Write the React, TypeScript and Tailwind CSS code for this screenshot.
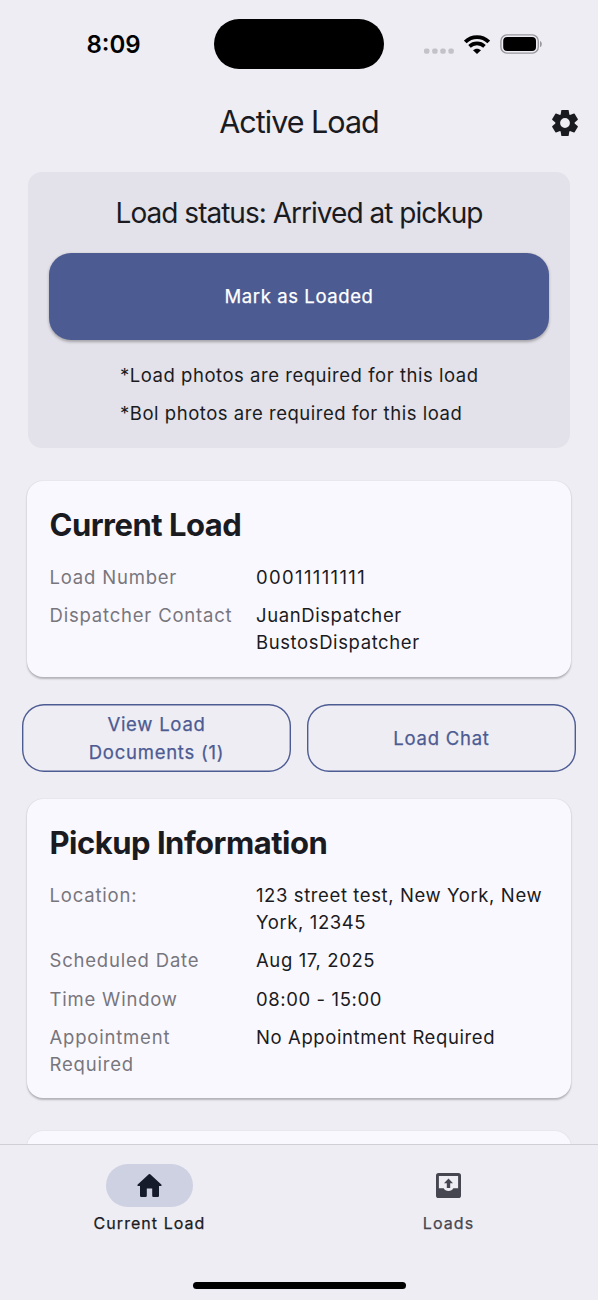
import type { ReactNode } from 'react';

type Detail = { label: string; value: string; numeric?: boolean };

const loadDetails: Detail[] = [
  { label: 'Load Number', value: '00011111111', numeric: true },
  { label: 'Dispatcher Contact', value: 'JuanDispatcher BustosDispatcher' },
];

const pickupDetails: Detail[] = [
  { label: 'Location:', value: '123 street test, New York, New York, 12345' },
  { label: 'Scheduled Date', value: 'Aug 17, 2025' },
  { label: 'Time Window', value: '08:00 - 15:00' },
  { label: 'Appointment Required', value: 'No Appointment Required' },
];

const gearTeeth = [0, 60, 120, 180, 240, 300];

function GearIcon() {
  return (
    <svg width="26" height="26" viewBox="-13 -13 26 26" fill="currentColor">
      <circle r="7.2" fill="none" stroke="currentColor" strokeWidth="4.6" />
      {gearTeeth.map((angle) => (
        <path
          key={angle}
          d="M-3 -13H3Q3.6 -13 3.700 -12.400L4.500 -7.500H-4.500L-3.700 -12.400Q-3.600 -13 -3 -13Z"
          transform={`rotate(${angle})`}
        />
      ))}
    </svg>
  );
}

function HomeIcon() {
  return (
    <svg width="25" height="23" viewBox="0 0 25 23" fill="currentColor">
      <path d="M11.800 0.300Q12.500 -0.200 13.200 0.300L24.300 10.500Q25.300 11.700 24 11.900H22V21.800Q22 23 20.800 23H16.400Q15.200 23 15.200 21.800V14.600H9.800V21.800Q9.800 23 8.600 23H4.200Q3 23 3 21.800V11.900H1Q-0.300 11.700 0.700 10.500Z" />
    </svg>
  );
}

function OutboxIcon() {
  return (
    <svg width="25" height="25" viewBox="0 0 25 25" fill="currentColor">
      <path
        fillRule="evenodd"
        d="M2.600 0H22.400Q25 0 25 2.600V22.400Q25 25 22.400 25H2.600Q0 25 0 22.400V2.600Q0 0 2.600 0ZM2.900 2.900V15.200H7.700C8.600 17 10.200 18 12.500 18S16.400 17 17.300 15.200H22.100V2.900Z"
      />
      <path d="M12.500 5.600L17 10.300H14.200V15H10.800V10.300H8Z" />
    </svg>
  );
}

function StatusBar() {
  return (
    <div className="grid h-[88px] grid-cols-[214px_170px_214px] items-center text-black">
      <span className="pt-px pl-[13px] text-center text-[24px] font-semibold tracking-[0px]">8:09</span>
      <div className="h-[50px] rounded-full bg-black" />
      <div className="flex items-center pl-[40px]">
        <svg width="30" height="6" viewBox="0 0 30 6" className="mt-[13px]" fill="#c3c2c8">
          <rect x="0" y="0.5" width="5.4" height="5.2" rx="1.8" />
          <rect x="8.2" y="0.5" width="5.4" height="5.2" rx="1.8" />
          <rect x="16.3" y="0.5" width="5.4" height="5.2" rx="1.8" />
          <rect x="24.4" y="0.5" width="5.4" height="5.2" rx="1.8" />
        </svg>
        <svg width="26" height="19" viewBox="0 0 26 19" className="ml-[10px]" fill="none" stroke="black">
          <path d="M1.3 7C7.8 0.6 18.2 0.6 24.7 7" strokeWidth="3.8" />
          <path d="M5.5 11.4C9.7 7.4 16.3 7.4 20.5 11.4" strokeWidth="3.6" />
          <path d="M9 15.200C11.200 13.100 14.800 13.100 17 15.200L13 19Z" fill="black" stroke="none" />
        </svg>
        <svg width="42" height="20" viewBox="0 0 42 20" className="ml-[10px]">
          <rect x="0.9" y="0.9" width="37.4" height="18.2" rx="6" fill="none" stroke="#99989d" strokeWidth="1.4" />
          <rect x="3.2" y="3.1" width="32.8" height="13.8" rx="4" fill="black" />
          <path d="M40 6.9C42.4 7.7 42.4 12.3 40 13.1Z" fill="#99989d" />
        </svg>
      </div>
    </div>
  );
}

function Card({ title, children }: { title: string; children: ReactNode }) {
  return (
    <section className="mx-[27px] rounded-[16px] bg-[#faf8ff] px-[22.5px] pb-[20px] shadow-[0_1.5px_2px_rgba(0,0,0,0.24),0_0_1.5px_rgba(0,0,0,0.08)]">
      <h2 className="pt-[22px] text-[31px] leading-[43px] font-bold tracking-[-0.5px]">{title}</h2>
      {children}
    </section>
  );
}

function DetailRows({ rows }: { rows: Detail[] }) {
  return (
    <dl className="mt-[18px] flex flex-col gap-[11px]">
      {rows.map((row) => (
        <div key={row.label} className="grid grid-cols-[206.5px_1fr]">
          <dt className="pr-[12px] tracking-[0.8px] text-[#77767c]">{row.label}</dt>
          <dd className={row.numeric ? 'tracking-[1.35px]' : 'tracking-[0.6px]'}>{row.value}</dd>
        </div>
      ))}
    </dl>
  );
}

export default function App() {
  return (
    <div className="flex h-[1300px] w-[598px] flex-col overflow-hidden bg-[#eeedf4] font-['Inter',sans-serif] text-[18.5px] leading-[27.2px] tracking-[0.6px] text-[#1a1b21]">
      <StatusBar />

      <header className="grid h-[69px] grid-cols-[1fr_auto_1fr] items-center">
        <h1 className="col-start-2 pb-px text-[30.5px] tracking-[-1px]">Active Load</h1>
        <button className="mr-[20px] justify-self-end" aria-label="Settings">
          <GearIcon />
        </button>
      </header>

      <main className="min-h-0 flex-1 overflow-hidden pt-[15px]">
        <section className="mx-[28px] h-[276px] rounded-[14px] bg-[#e3e1e9] px-[21px] pt-[19px]">
          <h2 className="text-center text-[28px] leading-[44px] tracking-[-0.98px]">Load status: Arrived at pickup</h2>
          <button className="mt-[18px] flex h-[87px] w-full items-center justify-center rounded-[22px] bg-[#4c5b92] pt-px tracking-[0.6px] text-white shadow-[0_1.5px_3px_rgba(0,0,0,0.28)] [-webkit-text-stroke:0.25px]">
            Mark as Loaded
          </button>
          <div className="mt-[22px] ml-[71px] flex flex-col gap-[11px] tracking-[0.53px]">
            <p>*Load photos are required for this load</p>
            <p>*Bol photos are required for this load</p>
          </div>
        </section>

        <div className="mt-[33px]">
          <Card title="Current Load">
            <DetailRows rows={loadDetails} />
          </Card>
        </div>

        <div className="mx-[22px] mt-[27.4px] grid h-[68px] grid-cols-2 gap-[16px] tracking-[0.75px] text-[#4c5b92] [-webkit-text-stroke:0.25px]">
          <button className="rounded-[22px] px-[50px] pt-px shadow-[inset_0_0_0_1.4px_#4c5b92]">View Load Documents (1)</button>
          <button className="rounded-[22px] pt-px shadow-[inset_0_0_0_1.4px_#4c5b92]">Load Chat</button>
        </div>

        <div className="mt-[27px]">
          <Card title="Pickup Information">
            <DetailRows rows={pickupDetails} />
          </Card>
        </div>

        {/* next card, peeking out above the tab bar */}
        <div className="mx-[27px] mt-[32.4px] h-[160px] rounded-[16px] bg-[#faf8ff] shadow-[0_0_1.5px_rgba(0,0,0,0.12)]" />
      </main>

      <nav className="relative grid h-[156px] shrink-0 grid-cols-2 border-t border-[#d0cfd6] bg-[#eeedf4] pt-[19px] text-[16px] tracking-[1.05px] [-webkit-text-stroke:0.25px]">
        <a className="flex flex-col items-center">
          <span className="flex h-[43px] w-[87px] items-center justify-center rounded-full bg-[#ced1e2] text-[#161b2c]">
            <HomeIcon />
          </span>
          <span className="mt-[3px]">Current Load</span>
        </a>
        <a className="flex flex-col items-center text-[#45464f]">
          <span className="flex h-[43px] w-[87px] items-center justify-center">
            <OutboxIcon />
          </span>
          <span className="mt-[3px]">Loads</span>
        </a>
        <div className="absolute bottom-[11px] left-[193px] h-[7px] w-[213px] rounded-full bg-black" />
      </nav>
    </div>
  );
}
